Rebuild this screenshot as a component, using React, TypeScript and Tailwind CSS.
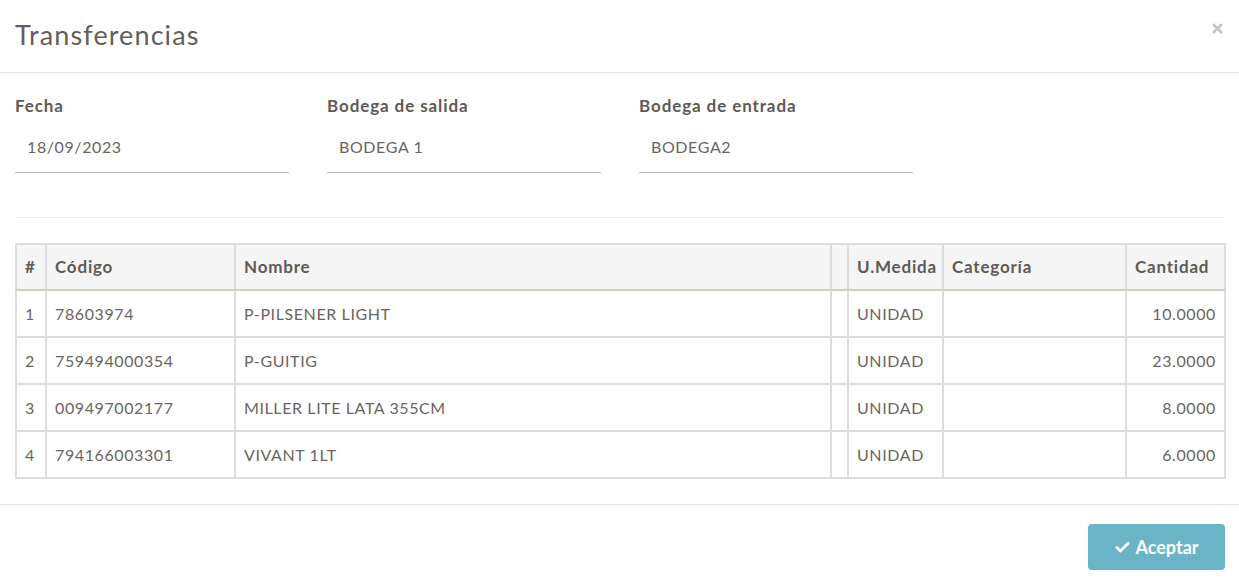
import { Check, X } from "lucide-react";

const rows = [
  { n: 1, codigo: "78603974", nombre: "P-PILSENER LIGHT", medida: "UNIDAD", cantidad: "10.0000" },
  { n: 2, codigo: "759494000354", nombre: "P-GUITIG", medida: "UNIDAD", cantidad: "23.0000" },
  { n: 3, codigo: "009497002177", nombre: "MILLER LITE LATA 355CM", medida: "UNIDAD", cantidad: "8.0000" },
  { n: 4, codigo: "794166003301", nombre: "VIVANT 1LT", medida: "UNIDAD", cantidad: "6.0000" },
];

const fields = [
  { label: "Fecha", value: "18/09/2023" },
  { label: "Bodega de salida", value: "BODEGA 1" },
  { label: "Bodega de entrada", value: "BODEGA2" },
];

const th = "border-2 border-[#dddddd] border-b-[#d6d0c4] px-[8px] font-bold";
const td = "border-2 border-[#dddddd] px-[8px]";

export default function App() {
  return (
    <div
      className="w-[1239px] h-[585px] bg-white text-[#5e5954] overflow-hidden"
      style={{ fontFamily: "Lato, 'Noto Sans', sans-serif" }}
    >
      {/* Header */}
      <div className="h-[73px] flex items-center justify-between pl-[15px] pr-[14px] border-b border-[#e5e5e5]">
        <h4 className="text-[27px] text-[#635e59] tracking-[1.1px] pb-[2px]">Transferencias</h4>
        <X className="w-[15px] h-[15px] text-[#c4c4c4] -mt-[15px]" strokeWidth={4} aria-hidden="true" />
      </div>

      {/* Body */}
      <div className="px-[15px] pt-[22px]">
        <div className="flex gap-[38px]">
          {fields.map((f) => (
            <div key={f.label} className="w-[274px]">
              <div className="text-[17px] font-bold text-[#5f5a55] tracking-[0.9px] h-[22px] leading-[22px]">{f.label}</div>
              <div className="h-[52px] mt-[4px] flex items-center px-[12px] text-[16px] tracking-[0.6px] text-[#6a655f] border-b border-[#b8b8b8]">
                {f.value}
              </div>
            </div>
          ))}
        </div>

        <div className="mt-[44px] border-t border-[#f1ece0]" />

        <table className="mt-[25px] w-[1209px] border-collapse border-2 border-[#dddddd] text-[16px] table-fixed">
          <colgroup>
            <col className="w-[30px]" />
            <col className="w-[189px]" />
            <col className="w-[596px]" />
            <col className="w-[17px]" />
            <col className="w-[95px]" />
            <col className="w-[183px]" />
            <col className="w-[99px]" />
          </colgroup>
          <thead>
            <tr className="h-[46px] bg-[#f5f5f5] text-left text-[17px] tracking-[0.8px] text-[#5f5a55] border-b-2 border-[#d6d0c4]">
              <th className={th}>#</th>
              <th className={th}>Código</th>
              <th className={th}>Nombre</th>
              <th className={th}></th>
              <th className={`${th} whitespace-nowrap`}>U.Medida</th>
              <th className={th}>Categoría</th>
              <th className={th}>Cantidad</th>
            </tr>
          </thead>
          <tbody>
            {rows.map((r) => (
              <tr key={r.n} className="h-[47px] text-[#6a655f] tracking-[0.6px]">
                <td className={`${td} px-[7px]`}>{r.n}</td>
                <td className={td}>{r.codigo}</td>
                <td className={td}>{r.nombre}</td>
                <td className={td}></td>
                <td className={td}>{r.medida}</td>
                <td className={td}></td>
                <td className={`${td} text-right`}>{r.cantidad}</td>
              </tr>
            ))}
          </tbody>
        </table>
      </div>

      {/* Footer */}
      <div className="mt-[25px] border-t border-[#e5e5e5] flex justify-end pr-[14px] pt-[19px]">
        <button className="w-[137px] h-[46px] rounded-[4px] bg-[#6ab4c8] text-white text-[18px] font-bold flex items-center justify-center gap-[4px]">
          <Check className="w-[17px] h-[17px]" strokeWidth={4} aria-hidden="true" />
          Aceptar
        </button>
      </div>
    </div>
  );
}
